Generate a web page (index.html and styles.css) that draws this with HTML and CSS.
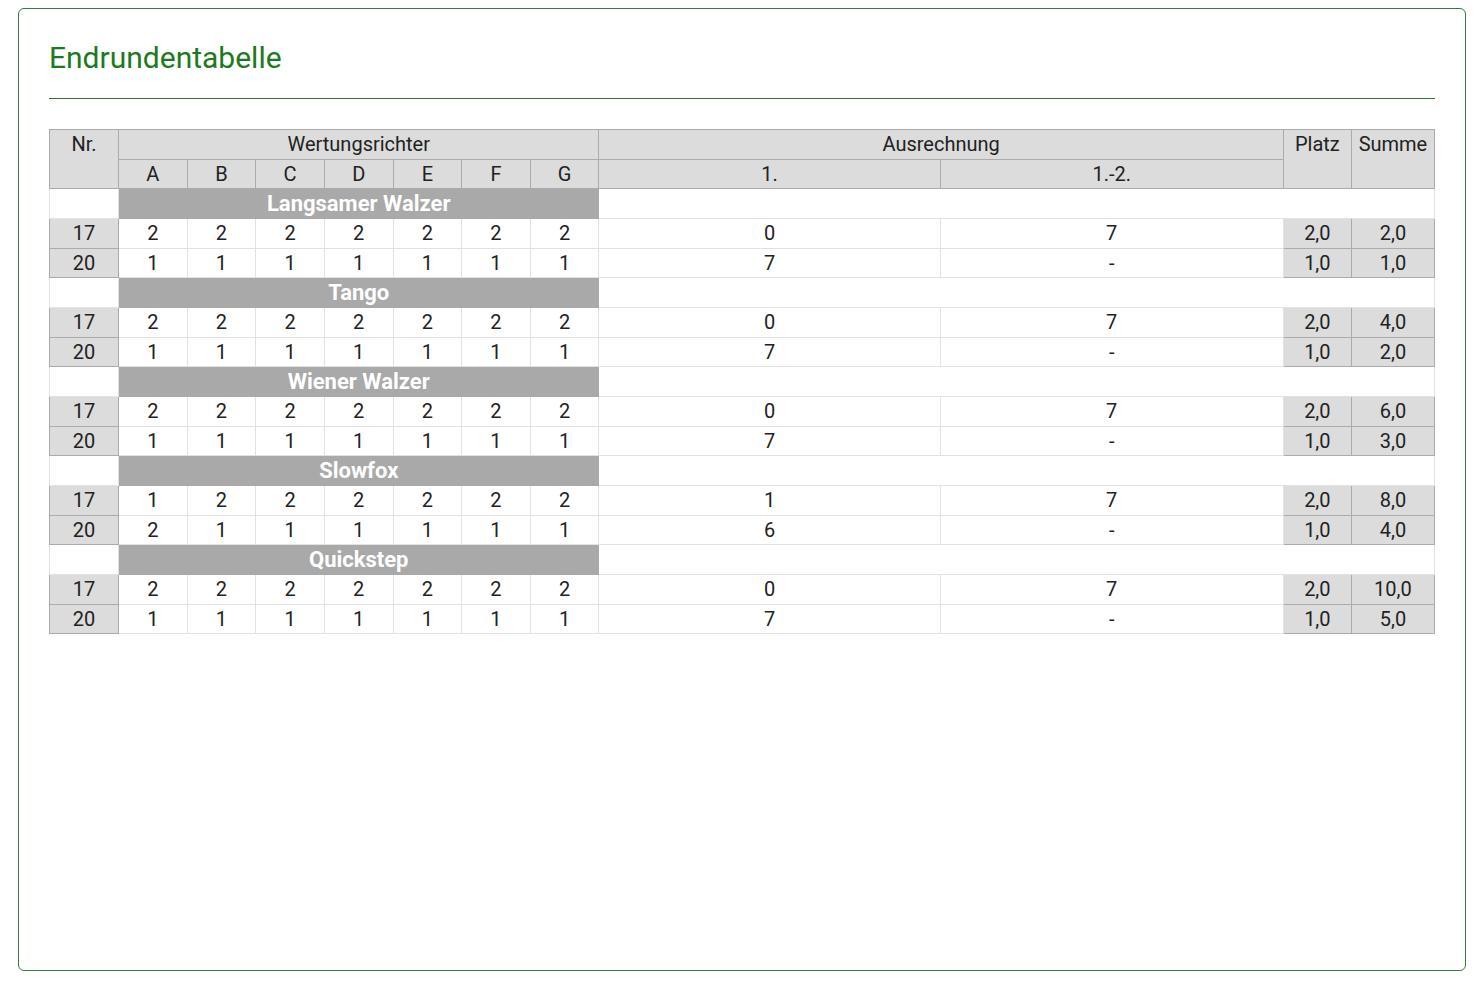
FILE: index.html
```html
<!DOCTYPE html>
<html lang="de">
<head>
<meta charset="utf-8">
<title>Endrundentabelle</title>
<link rel="stylesheet" href="styles.css">
</head>
<body>
<div class="card">
  <h2 class="title">Endrundentabelle</h2>
  <hr class="rule">
  <table class="result">
    <colgroup>
      <col class="c-nr">
      <col class="c-j"><col class="c-j"><col class="c-j"><col class="c-j"><col class="c-j"><col class="c-j"><col class="c-j">
      <col class="c-a1"><col class="c-a2">
      <col class="c-pl"><col class="c-su">
    </colgroup>
    <thead>
      <tr>
        <th rowspan="2" class="top">Nr.</th>
        <th colspan="7">Wertungsrichter</th>
        <th colspan="2">Ausrechnung</th>
        <th rowspan="2" class="top">Platz</th>
        <th rowspan="2" class="top">Summe</th>
      </tr>
      <tr>
        <th>A</th><th>B</th><th>C</th><th>D</th><th>E</th><th>F</th><th>G</th>
        <th>1.</th><th>1.-2.</th>
      </tr>
    </thead>
    <tbody>
      <tr class="dance"><td class="blank"></td><td colspan="7" class="dname">Langsamer Walzer</td><td colspan="4" class="blank"></td></tr>
      <tr><td class="g">17</td><td>2</td><td>2</td><td>2</td><td>2</td><td>2</td><td>2</td><td>2</td><td>0</td><td>7</td><td class="g">2,0</td><td class="g">2,0</td></tr>
      <tr><td class="g">20</td><td>1</td><td>1</td><td>1</td><td>1</td><td>1</td><td>1</td><td>1</td><td>7</td><td>-</td><td class="g">1,0</td><td class="g">1,0</td></tr>

      <tr class="dance"><td class="blank"></td><td colspan="7" class="dname">Tango</td><td colspan="4" class="blank"></td></tr>
      <tr><td class="g">17</td><td>2</td><td>2</td><td>2</td><td>2</td><td>2</td><td>2</td><td>2</td><td>0</td><td>7</td><td class="g">2,0</td><td class="g">4,0</td></tr>
      <tr><td class="g">20</td><td>1</td><td>1</td><td>1</td><td>1</td><td>1</td><td>1</td><td>1</td><td>7</td><td>-</td><td class="g">1,0</td><td class="g">2,0</td></tr>

      <tr class="dance"><td class="blank"></td><td colspan="7" class="dname">Wiener Walzer</td><td colspan="4" class="blank"></td></tr>
      <tr><td class="g">17</td><td>2</td><td>2</td><td>2</td><td>2</td><td>2</td><td>2</td><td>2</td><td>0</td><td>7</td><td class="g">2,0</td><td class="g">6,0</td></tr>
      <tr><td class="g">20</td><td>1</td><td>1</td><td>1</td><td>1</td><td>1</td><td>1</td><td>1</td><td>7</td><td>-</td><td class="g">1,0</td><td class="g">3,0</td></tr>

      <tr class="dance"><td class="blank"></td><td colspan="7" class="dname">Slowfox</td><td colspan="4" class="blank"></td></tr>
      <tr><td class="g">17</td><td>1</td><td>2</td><td>2</td><td>2</td><td>2</td><td>2</td><td>2</td><td>1</td><td>7</td><td class="g">2,0</td><td class="g">8,0</td></tr>
      <tr><td class="g">20</td><td>2</td><td>1</td><td>1</td><td>1</td><td>1</td><td>1</td><td>1</td><td>6</td><td>-</td><td class="g">1,0</td><td class="g">4,0</td></tr>

      <tr class="dance"><td class="blank"></td><td colspan="7" class="dname">Quickstep</td><td colspan="4" class="blank"></td></tr>
      <tr><td class="g">17</td><td>2</td><td>2</td><td>2</td><td>2</td><td>2</td><td>2</td><td>2</td><td>0</td><td>7</td><td class="g">2,0</td><td class="g">10,0</td></tr>
      <tr><td class="g">20</td><td>1</td><td>1</td><td>1</td><td>1</td><td>1</td><td>1</td><td>1</td><td>7</td><td>-</td><td class="g">1,0</td><td class="g">5,0</td></tr>
    </tbody>
  </table>
</div>
</body>
</html>
```

FILE: styles.css
```css
html, body {
  background: #ffffff;
}
body {
  margin: 8px;
  font-family: Roboto, "Liberation Sans", sans-serif;
  color: #222222;
}
.card {
  margin-left: 10px;
  width: 1448px;
  height: 963px;
  box-sizing: border-box;
  border: 1.5px solid #3a7a3c;
  border-radius: 6px;
  padding: 29px 30px 0 30px;
}
.title {
  margin: 0;
  font-size: 30px;
  font-weight: 400;
  line-height: 40px;
  color: #1c7a1c;
}
.rule {
  margin: 20px 0 30px 0;
  border: 0;
  height: 0;
  border-top: 1.5px solid #2f7a32;
}
.result {
  width: 1386px;
  border-collapse: collapse;
  table-layout: fixed;
  font-size: 20px;
}
.c-nr { width: 69px; }
.c-j { width: 68.6px; }
.c-a1 { width: 341px; }
.c-a2 { width: 343px; }
.c-pl { width: 68px; }
.c-su { width: 83px; }
.result tr {
  height: 29.67px;
}
.result th {
  background: #dcdcdc;
  font-weight: 400;
  border: 1px solid #ababab;
  padding: 0;
  text-align: center;
  vertical-align: middle;
  line-height: 28px;
}
.result th.top {
  vertical-align: top;
}
.result td {
  border: 1px solid #e2e2e2;
  padding: 0;
  text-align: center;
  vertical-align: middle;
  line-height: 28px;
}
.result td.g {
  background: #dcdcdc;
  border: 1px solid #ababab;
}
.result td.dname {
  background: #a9a9a9;
  color: #ffffff;
  font-weight: 700;
  font-size: 22px;
  border: 1px solid #a9a9a9;
}
.result td.blank {
  background: #ffffff;
}
```
